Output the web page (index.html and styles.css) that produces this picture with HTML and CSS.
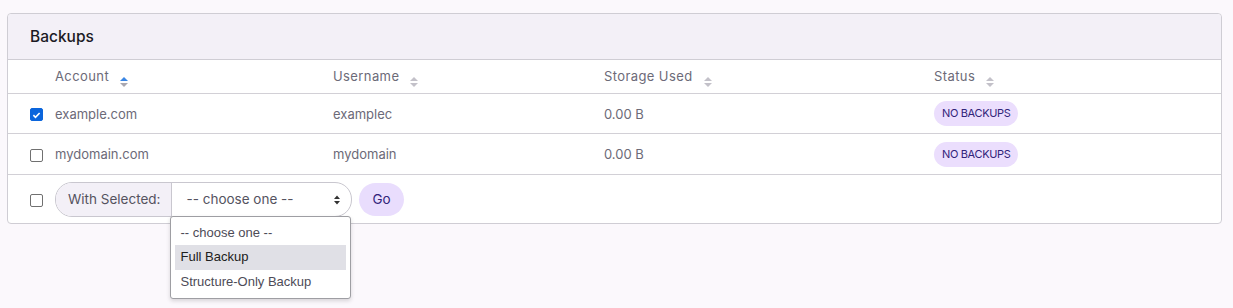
FILE: index.html
```html
<!DOCTYPE html>
<html lang="en">
<head>
    <meta charset="UTF-8">
    <title>Backups</title>
    <link rel="stylesheet" href="styles.css">
</head>
<body>
    <div class="card">
        <div class="card-header">Backups</div>
        <table class="grid">
            <colgroup>
                <col class="c-check">
                <col class="c-account">
                <col class="c-user">
                <col class="c-storage">
                <col>
            </colgroup>
            <thead>
                <tr>
                    <th></th>
                    <th>Account <span class="sort active"><i class="up"></i><i class="down"></i></span></th>
                    <th>Username <span class="sort"><i class="up"></i><i class="down"></i></span></th>
                    <th>Storage Used <span class="sort"><i class="up"></i><i class="down"></i></span></th>
                    <th>Status <span class="sort"><i class="up"></i><i class="down"></i></span></th>
                </tr>
            </thead>
            <tbody>
                <tr>
                    <td><span class="check on"><svg viewBox="0 0 12 12" width="12" height="12"><path d="M2.6 6.2l2.3 2.3 4.5-4.7" fill="none" stroke="#fff" stroke-width="1.8"/></svg></span></td>
                    <td>example.com</td>
                    <td>examplec</td>
                    <td>0.00 B</td>
                    <td><span class="badge">NO BACKUPS</span></td>
                </tr>
                <tr>
                    <td><span class="check"></span></td>
                    <td>mydomain.com</td>
                    <td>mydomain</td>
                    <td>0.00 B</td>
                    <td><span class="badge">NO BACKUPS</span></td>
                </tr>
                <tr class="foot">
                    <td><span class="check"></span></td>
                    <td colspan="4">
                        <div class="actions">
                            <div class="input-group">
                                <span class="group-label">With Selected:</span>
                                <div class="select">
                                    <span>-- choose one --</span>
                                    <svg class="caret" viewBox="0 0 8 12" width="8" height="12"><path d="M4 1.5L7 5H1z M4 10.5L1 7h6z" fill="#333"/></svg>
                                    <ul class="menu">
                                        <li>-- choose one --</li>
                                        <li class="hover">Full Backup</li>
                                        <li>Structure-Only Backup</li>
                                    </ul>
                                </div>
                            </div>
                            <button class="go">Go</button>
                        </div>
                    </td>
                </tr>
            </tbody>
        </table>
    </div>
</body>
</html>
```

FILE: styles.css
```css
html, body {
    height: 100%;
}

body {
    box-sizing: border-box;
    margin: 0;
    padding: 13px 11px 0 7px;
    background: #fbf8fc;
    font-family: Inter, "Noto Sans", sans-serif;
    color: #6c6a78;
}

.card {
    background: #fff;
    border: 1px solid #cfcdd4;
    border-radius: 4px;
}

.card-header {
    height: 45px;
    line-height: 45px;
    padding-left: 22px;
    background: #f3f0f7;
    border-bottom: 1px solid #cfcdd4;
    border-radius: 4px 4px 0 0;
    font-size: 15.5px;
    font-weight: 500;
    color: #1b1a24;
}

.grid {
    width: 100%;
    border-collapse: collapse;
    font-size: 13px;
}

.c-check { width: 39px; }
.c-account { width: 278px; }
.c-user { width: 271px; }
.c-storage { width: 330px; }

.grid th {
    height: 31px;
    padding: 2px 8px 0;
    text-align: left;
    font-weight: 400;
    letter-spacing: 0.4px;
    color: #6c6a78;
    border-bottom: 1px solid #d2d0d6;
}

.grid td {
    height: 39px;
    padding: 0 8px;
    border-bottom: 1px solid #d2d0d6;
}

.grid tbody tr:nth-child(2) td { height: 40px; }

.grid tr.foot td {
    height: 48px;
    border-bottom: none;
}

.grid th:first-child,
.grid td:first-child {
    padding-left: 22px;
    padding-right: 0;
}

.sort {
    display: inline-flex;
    flex-direction: column;
    gap: 2px;
    margin-left: 7px;
    vertical-align: 0.5px;
}

.sort i {
    display: block;
    width: 0;
    height: 0;
    border-left: 4px solid transparent;
    border-right: 4px solid transparent;
}

.sort .up { border-bottom: 4.5px solid #c3c1c9; }
.sort .down { border-top: 4.5px solid #c3c1c9; }
.sort.active .up { border-bottom-color: #3a86e4; }
.sort.active .down { border-top-color: #a9a7b0; }

.check {
    display: inline-flex;
    align-items: center;
    justify-content: center;
    width: 11px;
    height: 11px;
    border: 1px solid #707070;
    border-radius: 2px;
    background: #fff;
    vertical-align: middle;
}

.check.on {
    background: #0b65dc;
    border-color: #0b65dc;
}

.badge {
    display: inline-block;
    height: 25px;
    line-height: 25px;
    padding: 0 8px;
    border-radius: 13px;
    background: #ebdefd;
    color: #32247a;
    font-size: 11px;
    letter-spacing: -0.35px;
}

.actions {
    display: flex;
    align-items: center;
    gap: 7px;
}

.input-group {
    display: flex;
    height: 33px;
    border: 1px solid #c9c7cf;
    border-radius: 17px;
}

.group-label {
    display: flex;
    align-items: center;
    padding: 0 11px 0 12px;
    background: #f3f0f7;
    border-right: 1px solid #c9c7cf;
    border-radius: 16px 0 0 16px;
    font-size: 13.5px;
    color: #55535f;
}

.select {
    position: relative;
    display: flex;
    align-items: center;
    justify-content: space-between;
    width: 155px;
    padding: 0 10px 0 14px;
    font-size: 13.5px;
    color: #55535f;
}

.caret { margin-top: 1px; }

.menu {
    position: absolute;
    top: 33px;
    left: -2px;
    width: 171px;
    margin: 0;
    padding: 4px;
    list-style: none;
    background: #fff;
    border: 1px solid #9e9ea3;
    border-radius: 3px;
    box-shadow: 0 2px 4px rgba(0, 0, 0, 0.15);
    font-family: "Liberation Sans", Arial, sans-serif;
    font-size: 13px;
    color: #4d4b57;
    z-index: 5;
}

.menu li {
    height: 24.5px;
    line-height: 24.5px;
    padding: 0 5px;
}

.menu li.hover {
    background: #e0e0e6;
    color: #202020;
}

.go {
    height: 33px;
    padding: 0 13px;
    border: none;
    border-radius: 17px;
    background: #e9ddfd;
    color: #32247a;
    font-family: Inter, sans-serif;
    font-size: 13.5px;
    cursor: pointer;
}
```
